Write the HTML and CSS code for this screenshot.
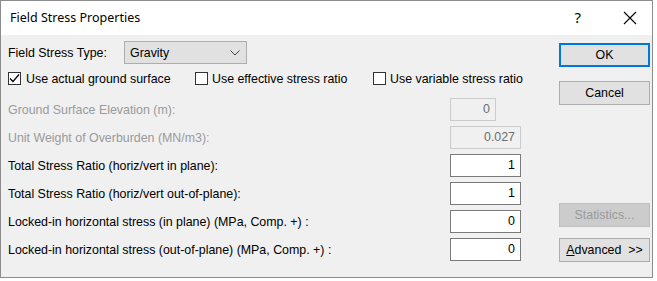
FILE: index.html
```html
<!DOCTYPE html>
<html>
<head>
<meta charset="utf-8">
<link rel="stylesheet" href="styles.css">
</head>
<body>
<div class="dialog">
  <div class="titlebar">
    <span class="title">Field Stress Properties</span>
    <span class="help">?</span>
    <span class="close"><svg width="14" height="14" viewBox="0 0 14 14"><path d="M1 1 L13 13 M13 1 L1 13" stroke="#000" stroke-width="1.1" fill="none"/></svg></span>
  </div>
  <div class="content">
    <div class="main">
      <div class="typerow">
        <span class="typelabel">Field Stress Type:</span>
        <div class="combo"><span>Gravity</span><svg class="chev" width="10" height="6" viewBox="0 0 10 6"><path d="M0.5 0.5 L5 5 L9.5 0.5" stroke="#444" stroke-width="1" fill="none"/></svg></div>
      </div>
      <div class="checks">
        <label class="check c1"><span class="box"><svg width="13" height="13" viewBox="0 0 13 13"><path d="M2 6.5 L5 9.5 L11 2.5" stroke="#000" stroke-width="1.2" fill="none"/></svg></span>Use actual ground surface</label>
        <label class="check c2"><span class="box"></span>Use effective stress ratio</label>
        <label class="check c3"><span class="box"></span>Use variable stress ratio</label>
      </div>
      <div class="fields">
        <span class="lbl disabled">Ground Surface Elevation (m):</span>
        <div class="inp dis short">0</div>
        <span class="lbl disabled">Unit Weight of Overburden (MN/m3):</span>
        <div class="inp dis">0.027</div>
        <span class="lbl">Total Stress Ratio (horiz/vert in plane):</span>
        <div class="inp">1</div>
        <span class="lbl">Total Stress Ratio (horiz/vert out-of-plane):</span>
        <div class="inp">1</div>
        <span class="lbl">Locked-in horizontal stress (in plane) (MPa, Comp. +) :</span>
        <div class="inp">0</div>
        <span class="lbl">Locked-in horizontal stress (out-of-plane) (MPa, Comp. +) :</span>
        <div class="inp">0</div>
      </div>
    </div>
    <div class="buttons">
      <div class="btn ok">OK</div>
      <div class="btn cancel">Cancel</div>
      <div class="spacer"></div>
      <div class="btn disabled-btn">Statistics...</div>
      <div class="btn adv"><span class="u">A</span>dvanced &nbsp;&gt;&gt;</div>
    </div>
  </div>
</div>
</body>
</html>
```
FILE: styles.css
```css
html, body {
  margin: 0;
  padding: 0;
  background: #ffffff;
}
body {
  font-family: "Liberation Sans", Arial, sans-serif;
  font-size: 12.4px;
  color: #000;
}
.dialog {
  width: 651px;
  height: 276px;
  border: 1px solid #8c8c8c;
  background: #f0f0f0;
  display: flex;
  flex-direction: column;
}
.titlebar {
  height: 34px;
  background: #fff;
  display: flex;
  align-items: center;
  flex: none;
}
.title {
  font-family: "Noto Sans", "Open Sans", sans-serif;
  font-size: 12.5px;
  margin-left: 9px;
  margin-top: -1px;
  color: #000;
}
.help {
  margin-left: auto;
  font-family: "Noto Sans", sans-serif;
  font-size: 15px;
  margin-right: 42px;
  margin-top: -2px;
}
.close {
  display: flex;
  margin-right: 15px;
  margin-top: -1px;
}
.content {
  flex: 1;
  display: flex;
  padding-left: 7px;
}
.main {
  width: 514px;
  display: flex;
  flex-direction: column;
}
.typerow {
  display: flex;
  align-items: center;
  margin-top: 6px;
  height: 23px;
}
.typelabel {
  width: 116px;
}
.combo {
  width: 116px;
  height: 21px;
  border: 1px solid #adadad;
  background: #e1e1e1;
  display: flex;
  align-items: center;
  padding-left: 5px;
  box-sizing: content-box;
}
.combo span { flex: 1; }
.chev { margin-right: 6px; }
.checks {
  display: flex;
  align-items: center;
  margin-top: 7px;
  height: 15px;
  white-space: nowrap;
}
.check {
  display: flex;
  align-items: center;
  flex: none;
  white-space: nowrap;
}
.c1 { width: 187px; }
.c2 { width: 178px; }
.box {
  width: 13px;
  height: 13px;
  border: 1px solid #333;
  background: #fff;
  box-sizing: border-box;
  margin-right: 4px;
  display: flex;
  flex: none;
}
.c1 .box { margin-right: 5px; }
.box svg { margin: -1px; }
.fields {
  display: grid;
  grid-template-columns: 442px auto;
  grid-auto-rows: 23px;
  row-gap: 5px;
  align-items: center;
  margin-top: 12px;
}
.lbl { color: #000; white-space: nowrap; }
.lbl.disabled { color: #9a9a9a; }
.inp {
  width: 71px;
  height: 23px;
  box-sizing: border-box;
  border: 1px solid #7a7a7a;
  background: #fff;
  text-align: right;
  padding-right: 5px;
  line-height: 21px;
  color: #000;
}
.inp.dis {
  border-color: #cccccc;
  background: #f0f0f0;
  color: #6d6d6d;
}
.inp.short { width: 46px; }
.buttons {
  margin-left: 37px;
  width: 91px;
  flex: none;
  display: flex;
  flex-direction: column;
  padding-top: 8px;
  padding-bottom: 15px;
}
.btn {
  height: 24px;
  box-sizing: border-box;
  border: 1px solid #adadad;
  background: #e1e1e1;
  display: flex;
  align-items: center;
  justify-content: center;
}
.btn.ok {
  border: 2px solid #0078d7;
}
.btn.cancel { margin-top: 14px; }
.spacer { flex: 1; }
.btn.disabled-btn {
  background: #cccccc;
  border-color: #bfbfbf;
  color: #9a9a9a;
}
.btn.adv { margin-top: 11px; }
.u { text-decoration: underline; }
```
